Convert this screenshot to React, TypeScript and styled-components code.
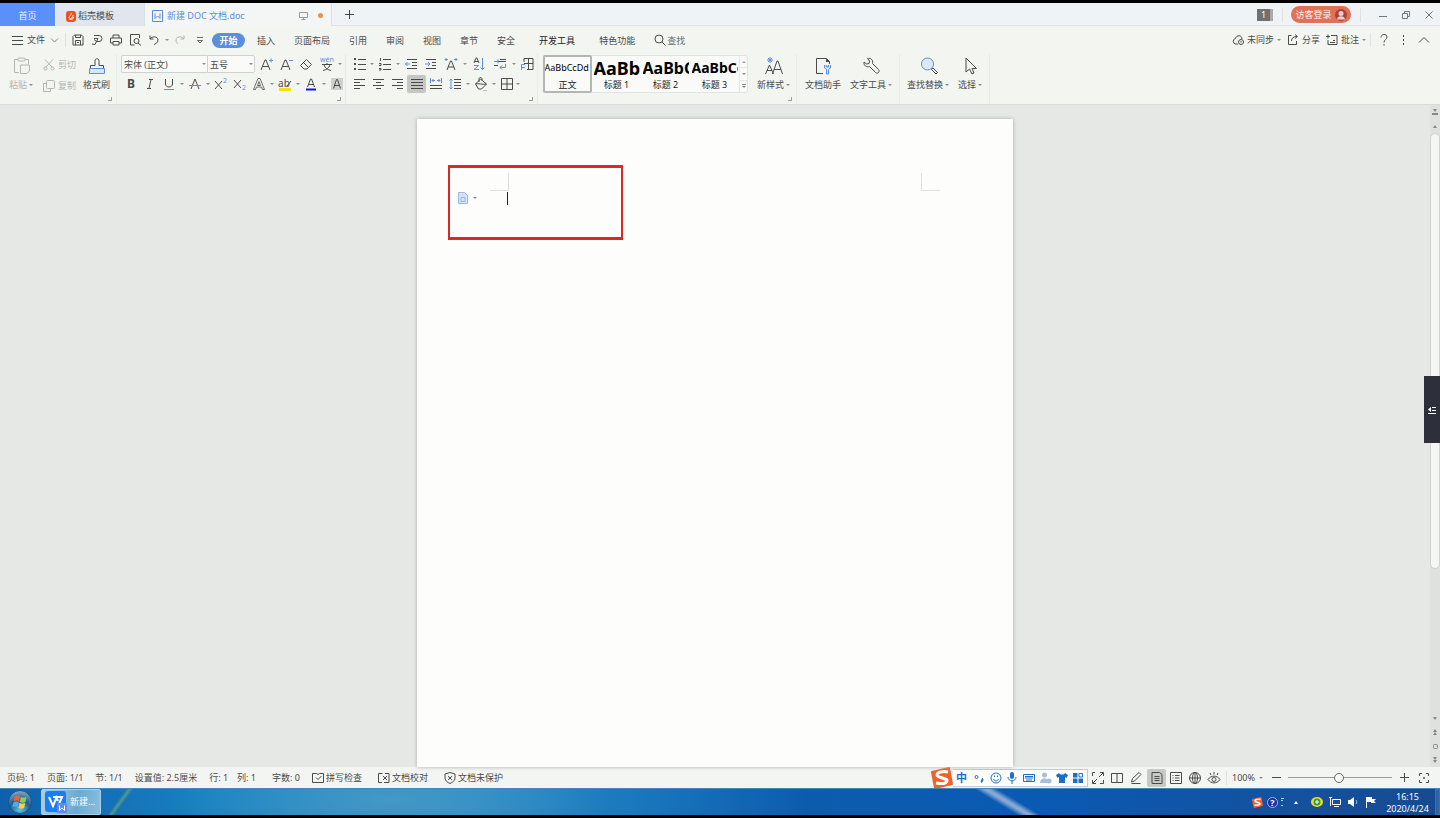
import React from 'react';
import styled, { createGlobalStyle, css } from 'styled-components';

const ink = '#4a4b4a';
const blue = '#5b8fdc';
const faint = '#b4b6b3';
const fontStack = '"Noto Sans", "Noto Sans CJK SC", sans-serif';

const GlobalStyle = createGlobalStyle`
  * { box-sizing: border-box; }
  body { margin: 0; background: #000; }
  button, input, select { font: inherit; color: inherit; }
  svg { display: block; flex: none; overflow: visible; }
`;

/* ---------- shared parts ---------- */

const Window = styled.div`
  display: flex;
  flex-direction: column;
  min-height: 100vh;
  padding: 3px 0;
  overflow: hidden;
  background: #000;
  color: ${ink};
  font: 9px/12px ${fontStack};
`;

const plain = css`
  display: flex;
  align-items: center;
  justify-content: center;
  flex: none;
  padding: 0;
  border: 0;
  background: none;
  white-space: nowrap;
  cursor: pointer;
`;

const Caret = styled.span<{ $w?: number }>`
  display: flex;
  flex: none;
  justify-content: center;
  width: ${(p) => p.$w ?? 7}px;
  &::after {
    content: '';
    border: 2px solid transparent;
    border-top-color: #8a8b8a;
    border-bottom: 0;
  }
`;

const Divider = styled.span<{ $m?: number; $r?: number }>`
  flex: none;
  width: 1px;
  height: 14px;
  margin: 0 ${(p) => p.$r ?? p.$m ?? 0}px 0 ${(p) => p.$m ?? 0}px;
  background: #dfe2df;
`;

const Spacer = styled.span`
  flex: 1;
`;

const Glyph = styled.svg`
  fill: none;
  stroke: currentColor;
  stroke-width: 1;
  text {
    fill: currentColor;
    stroke: none;
    text-anchor: middle;
    font-family: ${fontStack};
  }
  .b { stroke: ${blue}; }
  .bf { fill: ${blue}; stroke: none; }
  .f { fill: currentColor; stroke: none; }
`;

type IcoProps = { w?: number; h?: number; children: React.ReactNode };
const Ico = ({ w = 14, h = 14, children }: IcoProps) => (
  <Glyph width={w} height={h} viewBox={`0 0 ${w} ${h}`} aria-hidden="true">
    {children}
  </Glyph>
);

/* ---------- title bar ---------- */

const TitleBar = styled.header`
  display: flex;
  align-items: center;
  height: 23px;
  flex: none;
  background: #eff3f5;
  box-shadow: inset 0 -1px #dbe2e8;
`;

const Tab = styled.button<{ $kind: 'home' | 'idle' | 'active' }>`
  ${plain}
  height: 23px;
  padding-top: 2px;
  justify-content: flex-start;
  ${(p) => p.$kind === 'home' && css`
    width: 55px;
    justify-content: center;
    background: #5b8ff9;
    color: #eef4ff;
  `}
  ${(p) => p.$kind === 'idle' && css`
    width: 88px;
    margin-left: 1px;
    padding-left: 10px;
    gap: 2px;
    background: #e0e5ee;
  `}
  ${(p) => p.$kind === 'active' && css`
    width: 188px;
    padding: 2px 8px 0 7px;
    gap: 4px;
    border: solid #d9e0e6;
    border-width: 0 1px;
    background: #f3f6f5;
    color: ${blue};
  `}
`;

const UnsavedDot = styled.span`
  width: 5px;
  height: 5px;
  margin-left: 5px;
  border-radius: 50%;
  background: #e2954c;
`;

const TitleButton = styled.button<{ $w?: number }>`
  ${plain}
  width: ${(p) => p.$w ?? 23}px;
  height: 23px;
  color: #777;
`;

const CountBadge = styled.span`
  width: 16px;
  height: 12px;
  border-right: 3px solid #a9abab;
  background: #6f7171;
  color: #fff;
  line-height: 12px;
  text-align: center;
`;

const LoginPill = styled.button`
  ${plain}
  gap: 3px;
  width: 60px;
  height: 17px;
  border-radius: 9px;
  background: #e0705a;
  color: #fff3ee;
`;

/* ---------- menu row ---------- */

const MenuRow = styled.nav`
  display: flex;
  align-items: center;
  flex: none;
  height: 28px;
  padding: 0 6px 0 12px;
  background: #f3f5f1;
`;

const FileButton = styled.button`
  ${plain}
  gap: 4px;
  width: 47px;
  justify-content: flex-start;
`;

const QuickButton = styled.button<{ $w?: number; $dim?: boolean }>`
  ${plain}
  width: ${(p) => p.$w ?? 19}px;
  height: 20px;
  color: ${(p) => (p.$dim ? faint : ink)};
`;

const MenuTabs = styled.div`
  display: flex;
  align-items: center;
  gap: 19px;
  margin-left: 2px;
`;

const MenuTab = styled.button<{ $on?: boolean; $strong?: boolean; $apart?: boolean }>`
  ${plain}
  height: 15px;
  padding-top: 2px;
  margin-left: ${(p) => (p.$apart ? 5 : 0)}px;
  color: ${(p) => (p.$strong ? '#222' : ink)};
  ${(p) => p.$on && css`
    width: 33px;
    margin-right: -7px;
    border-radius: 8px;
    background: #5a8fe0;
    color: #fff;
    font-weight: 700;
  `}
`;

const SearchField = styled.label`
  display: flex;
  align-items: center;
  gap: 1px;
  input {
    width: 40px;
    padding: 2px 0 0;
    border: 0;
    outline: 0;
    background: none;
  }
  input::placeholder { color: #6c6d6c; opacity: 1; }
`;

const MenuAction = styled.button`
  ${plain}
  gap: 3px;
  margin-left: 6px;
`;

/* ---------- ribbon ---------- */

const Ribbon = styled.section`
  display: flex;
  flex: none;
  height: 51px;
  border-bottom: 1px solid #d8dbd8;
  background: #f3f5f1;
`;

const Group = styled.div<{ $w: number; $pad?: number; $gap?: number }>`
  position: relative;
  display: flex;
  flex: none;
  gap: ${(p) => p.$gap ?? 0}px;
  width: ${(p) => p.$w}px;
  padding-left: ${(p) => p.$pad ?? 4}px;
  border-right: 1px solid #e9ece8;
`;

const Launcher = styled.button`
  position: absolute;
  right: 4px;
  bottom: 3px;
  width: 4px;
  height: 4px;
  padding: 0;
  border: solid #9b9d9b;
  border-width: 0 1px 1px 0;
  background: none;
`;

const BigTool = styled.button<{ $dim?: boolean; $gap?: number }>`
  ${plain}
  flex-direction: column;
  justify-content: flex-start;
  gap: 4px;
  height: 42px;
  padding-top: 3px;
  margin-left: ${(p) => p.$gap ?? 0}px;
  color: ${(p) => (p.$dim ? faint : ink)};
`;

const ToolLabel = styled.span`
  display: flex;
  align-items: center;
`;

const Stack = styled.div`
  display: flex;
  flex-direction: column;
`;

const SmallTool = styled.button`
  ${plain}
  gap: 3px;
  height: 21px;
  margin: 0 7px 0 9px;
  color: ${faint};
`;

const ToolRow = styled.div`
  display: flex;
  align-items: center;
  height: 20px;
`;

const Tool = styled.button<{ $w?: number; $on?: boolean }>`
  ${plain}
  width: ${(p) => p.$w ?? 19}px;
  height: 18px;
  border-radius: 2px;
  background: ${(p) => (p.$on ? '#c4c7c3' : 'none')};
`;

const Combos = styled.div`
  display: flex;
  width: 135px;
  padding-right: 1px;
`;

const Combo = styled.label<{ $w: number }>`
  position: relative;
  display: flex;
  align-items: center;
  width: ${(p) => p.$w}px;
  height: 18px;
  border: 1px solid #cfd2cf;
  background: #fafbf9;
  &:first-child { border-right: 0; border-radius: 2px 0 0 2px; }
  &:last-child { border-radius: 0 2px 2px 0; }
  select {
    flex: 1;
    min-width: 0;
    padding: 1px 0 0 2px;
    border: 0;
    outline: 0;
    background: none;
    appearance: none;
  }
`;

const Gallery = styled.div`
  display: flex;
  width: 205px;
  height: 38px;
  margin: 1px 0 0 1px;
  border: 1px solid #e1e4e0;
  border-radius: 3px;
  background: #fafbf9;
`;

const StyleCard = styled.button<{ $size: number; $on?: boolean }>`
  ${plain}
  flex-direction: column;
  justify-content: flex-end;
  width: 49px;
  height: 38px;
  margin: -1px 0 0 ${(p) => (p.$on ? -1 : 0)}px;
  border: ${(p) => (p.$on ? '2px solid #b3b6b3' : '0')};
  border-radius: 2px;
  color: #1b1b1b;
  padding-bottom: ${(p) => (p.$on ? 0 : 2)}px;
  b {
    display: block;
    width: 46px;
    height: 21px;
    overflow: hidden;
    color: #000;
    font-size: ${(p) => p.$size}px;
    font-weight: ${(p) => (p.$on ? 400 : 700)};
    line-height: 20px;
    text-align: left;
  }
`;

const GalleryNav = styled.div`
  display: flex;
  flex-direction: column;
  flex: 1;
  button {
    ${plain}
    flex: 1;
    border-left: 1px solid #e6e8e5;
    border-bottom: 1px solid #e6e8e5;
  }
  button:last-child { border-bottom: 0; }
`;

/* ---------- work area ---------- */

const Workspace = styled.main`
  position: relative;
  display: flex;
  flex: 1;
  background: #e6e8e6;
`;

const Canvas = styled.div`
  display: flex;
  flex: 1;
  justify-content: center;
  padding-top: 14px;
`;

const Sheet = styled.article`
  position: relative;
  width: 596px;
  padding: 54px 73px 0;
  background: #fdfefc;
  box-shadow: 0 0 4px #a9aca9;
`;

const CropMarks = styled.div`
  display: flex;
  justify-content: space-between;
  &::before, &::after {
    content: '';
    width: 18px;
    height: 17px;
    border: solid #dfe1df;
    border-width: 0 1px 1px 0;
  }
  &::after { border-width: 0 0 1px 1px; }
`;

const TextCursor = styled.div`
  width: 1px;
  height: 13px;
  margin: 1px 0 0 17px;
  background: #222;
`;

const Highlight = styled.div`
  position: absolute;
  top: 46px;
  left: 31px;
  width: 175px;
  height: 75px;
  border: solid #dd2822;
  border-width: 3px 2px;
`;

const PasteOptions = styled.button`
  ${plain}
  position: absolute;
  top: 73px;
  left: 41px;
  gap: 2px;
  height: 12px;
`;

const ScrollRail = styled.aside`
  display: flex;
  flex-direction: column;
  align-items: center;
  width: 10px;
  background: #dfe1df;
  color: #858785;
`;

const RailButton = styled.button`
  ${plain}
  width: 10px;
  height: 14px;
`;

const Track = styled.div`
  display: flex;
  flex: 1;
  align-self: stretch;
  &::before {
    content: '';
    flex: 1;
    height: 75%;
    border: 1px solid #cfd2cf;
    border-radius: 5px;
    background: #f4f6f3;
  }
`;

const SideHandle = styled.button`
  ${plain}
  position: absolute;
  top: 41%;
  right: 0;
  width: 16px;
  height: 67px;
  background: #2d303b;
  color: #fff;
`;

/* ---------- status bar ---------- */

const StatusBar = styled.footer`
  display: flex;
  align-items: center;
  flex: none;
  height: 21px;
  padding: 0 6px 0 7px;
  background: #f3f5f2;
`;

const StatusItem = styled.span<{ $gap?: number }>`
  display: flex;
  align-items: center;
  gap: 2px;
  margin-right: ${(p) => p.$gap ?? 12}px;
  white-space: nowrap;
`;

const StatusButton = styled(StatusItem).attrs({ as: 'button' })`
  padding: 0;
  border: 0;
  background: none;
`;

const StatusTool = styled.button<{ $w?: number; $on?: boolean; $gap?: number }>`
  ${plain}
  width: ${(p) => p.$w ?? 19}px;
  height: 18px;
  margin-right: ${(p) => p.$gap ?? 0}px;
  border-radius: 2px;
  background: ${(p) => (p.$on ? '#c6c9c6' : 'none')};
`;

const ImeBar = styled.div`
  display: flex;
  align-items: center;
  height: 20px;
  color: #1d6fc4;
`;

const ImeKeys = styled.div`
  display: flex;
  align-items: center;
  height: 18px;
  padding-right: 1px;
  border: 1px solid #c3cad3;
  border-left: 0;
  background: #fdfefe;
`;

const ImeKey = styled.button<{ $w?: number }>`
  ${plain}
  width: ${(p) => p.$w ?? 17}px;
  font-size: 11px;
  font-weight: 700;
`;

const Zoom = styled.label`
  display: flex;
  align-items: center;
  width: 34px;
  select {
    width: 25px;
    padding: 0;
    border: 0;
    outline: 0;
    background: none;
    appearance: none;
  }
`;

const ZoomRange = styled.input`
  appearance: none;
  width: 104px;
  height: 12px;
  margin: 0 2px;
  background: linear-gradient(#9c9e9c, #9c9e9c) center / 100% 1px no-repeat;
  &::-webkit-slider-thumb {
    appearance: none;
    width: 10px;
    height: 10px;
    border: 1px solid #666;
    border-radius: 50%;
    background: #f8faf7;
  }
`;

/* ---------- taskbar ---------- */

const TaskBar = styled.footer`
  display: flex;
  align-items: center;
  flex: none;
  height: 27px;
  padding-left: 7px;
  background:
    linear-gradient(126deg, transparent 102px, #76b56a99 105px, transparent 108px),
    linear-gradient(31deg, transparent 524px, #86a9d4 529px, #86a9d4 531px, transparent 536px),
    radial-gradient(ellipse 220px 60px at 390px 10px, #4398c6, transparent),
    linear-gradient(90deg, #0e60ae 0, #1672b8 8%, #1581c0 14%, #2a8dc6 30%, #1a78be 44%, #0c5cae 56%, #0a5ab4 72%, #15509c 92%, #164a90 100%);
  border-top: 1px solid #4585b8;
`;

const StartButton = styled.button`
  ${plain}
  width: 26px;
`;

const TaskButton = styled.button`
  ${plain}
  justify-content: flex-start;
  gap: 3px;
  width: 60px;
  height: 26px;
  margin-left: 8px;
  padding-left: 3px;
  border: 1px solid #a8d0e8;
  border-radius: 2px;
  background: linear-gradient(100deg, #a8cfe4, #6aaad2 60%, #8abfde);
  color: #fff;
`;

const TrayButton = styled.button<{ $w?: number }>`
  ${plain}
  width: ${(p) => p.$w ?? 18}px;
  color: #fff;
`;

const Clock = styled.time`
  width: 55px;
  padding-top: 1px;
  color: #fff;
  text-align: center;
`;

const ShowDesktop = styled.button`
  width: 5px;
  height: 26px;
  padding: 0;
  border: 1px solid #3f6fae;
  background: #2d62a4;
`;

/* ---------- drawings ---------- */

const SogouMark = ({ s }: { s: number }) => (
  <svg width={s} height={s} viewBox="0 0 22 22" aria-hidden="true">
    <path d="M1 5 18 1l3 16L4 21z" fill="#f0622a" stroke="#f0622a" strokeWidth="2" strokeLinejoin="round" />
    <path d="M17 5C12 4 6 5 6 8s11 3 10 6-6 3-11 2" fill="none" stroke="#fff" strokeWidth="3" />
  </svg>
);

const AlignLines = ({ d }: { d: string }) => (
  <Ico w={12} h={12}><path d={d} /></Ico>
);

const LetterIcon = ({ mark, minus }: { mark?: boolean; minus?: boolean }) => (
  <Ico>
    <path d="M2 13 6 3h1l4 10M3.500 9.500h6" />
    {mark && <path className="b" d="M10 3.500h4M12 1.500v4" />}
    {minus && <path className="b" d="M10 3.500h4" />}
  </Ico>
);

const Bullets = ({ numbers }: { numbers?: boolean }) => (
  <Ico w={12} h={12}>
    <path d="M4 1.500h8M4 6.500h8M4 11.500h8" />
    {numbers
      ? <path d="M1.500 0v3M0 5.500h2v2H0M0 10.500h2v1.500H0" />
      : <path className="f" d="M0 0h2v2H0zM0 5h2v2H0zM0 10h2v2H0z" />}
  </Ico>
);

const quick: { name: string; w?: number; dim?: boolean; caret?: boolean; art: React.ReactNode }[] = [
  { name: '保存', art: <Ico w={12} h={12}><path d="M1 2.500 2.500 1h7L11 2.500V11H1zM3.500 1v2.500h5V1M3.500 11V6.500h5V11M5 8.500h2" /></Ico> },
  { name: '输出为PDF', art: <Ico w={12} h={12}><path d="M3 1.500h5a2.500 2.500 0 0 1 0 6H5M3 4.500h4M7 4.500 4 10.500M4 10.500l-3-.5M5.500 7.500 3 5.500" /></Ico> },
  { name: '打印', art: <Ico w={12} h={12}><path d="M3 4V1h6v3M3 9H.500V4h11v5H9M3 7.500h6V11H3z" /></Ico> },
  { name: '打印预览', art: <Ico w={12} h={12}><path d="M10.500 4V.5h-9v10.500h4" /><circle cx="7.500" cy="7" r="2.500" /><path d="m9 9 3 2.500" /></Ico> },
  { name: '撤销', caret: true, art: <Ico w={12} h={12}><path d="M2 1.500v3.500h3.500M2 5c2-3 8-3 8 1 0 3-3 4-4 4.500" /></Ico> },
  { name: '恢复', dim: true, art: <Ico w={12} h={12}><path d="M10 1.500v3.500H6.500M10 5C8 2 2 2 2 6c0 2 1 3 2 4" /></Ico> },
  { name: '自定义快速访问工具栏', w: 21, art: <Ico w={8} h={8}><path d="M1 1.500h6M1.500 4.500h5L4 7z" strokeWidth=".8" /></Ico> },
];

const menus = ['插入', '页面布局', '引用', '审阅', '视图', '章节', '安全', '开发工具', '特色功能'];

const cards = [
  { sample: 'AaBbCcDd', name: '正文', size: 9 },
  { sample: 'AaBb', name: '标题 1', size: 18 },
  { sample: 'AaBbC', name: '标题 2', size: 16 },
  { sample: 'AaBbCc', name: '标题 3', size: 14 },
];

export default function App() {
  return (
    <Window>
      <GlobalStyle />

      <TitleBar>
        <Tab $kind="home">首页</Tab>
        <Tab $kind="idle">
          <Ico w={10} h={12}>
            <rect x="0" y="1" width="10" height="11" rx="3" fill="#f0501e" stroke="none" />
            <path d="M5 3c1 2-2 3-2 5M7 5c0 2-1 4-4 4M7.500 7c0 2-2 3-4 2" stroke="#fff" />
          </Ico>
          稻壳模板
        </Tab>
        <Tab $kind="active">
          <Ico w={11} h={12}><path d="M.5.5h10v11H.5zM3 3.500v5l2.500-2.500L8 8.500v-5" /></Ico>
          新建 DOC 文档.doc
          <Spacer />
          <Ico w={10} h={10}><path d="M.5 1.500h8v5h-8zM4.500 6.500v2M2.500 8.500h4" stroke="#999b9b" /></Ico>
          <UnsavedDot />
        </Tab>
        <TitleButton $w={34} aria-label="新建标签">
          <Ico w={9} h={9}><path d="M4.500 0v9M0 4.500h9" stroke="#444" /></Ico>
        </TitleButton>
        <Spacer />
        <CountBadge>1</CountBadge>
        <Divider $m={9} $r={8} />
        <LoginPill>
          访客登录
          <Ico w={12} h={12}>
            <circle cx="6" cy="6" r="6" fill="#a8443c" stroke="none" />
            <circle cx="6" cy="4.500" r="2.500" fill="#f1cfc9" stroke="none" />
            <path d="M2 10.500c0-4.500 8-4.500 8 0z" fill="#f1cfc9" stroke="none" />
          </Ico>
        </LoginPill>
        <Divider $m={9} $r={10} />
        <TitleButton aria-label="最小化"><Ico w={8} h={8}><path d="M0 5.500h8" /></Ico></TitleButton>
        <TitleButton aria-label="还原"><Ico w={8} h={8}><path d="M.5 2.500h5v5h-5zM2.500 2.500V.5h5v5h-2" /></Ico></TitleButton>
        <TitleButton aria-label="关闭"><Ico w={8} h={8}><path d="m.5.5 7 7M7.500.5l-7 7" /></Ico></TitleButton>
      </TitleBar>

      <MenuRow>
        <FileButton>
          <Ico w={11} h={9}><path d="M0 .5h11M0 4.500h11M0 8.500h11" /></Ico>
          文件
          <Ico w={10} h={8}><path d="m2 2.500 3.500 3.500L9 2.500" stroke="#8a8b8a" /></Ico>
        </FileButton>
        <Divider $m={6} $r={2} />
        {quick.map((q) => (
          <React.Fragment key={q.name}>
            <QuickButton $w={q.w} $dim={q.dim} aria-label={q.name}>{q.art}</QuickButton>
            {q.caret && <Caret />}
          </React.Fragment>
        ))}
        <MenuTabs>
          <MenuTab $on>开始</MenuTab>
          {menus.map((m) => (
            <MenuTab key={m} $strong={m === '开发工具'} $apart={m.endsWith('工具') || m.endsWith('功能')}>
              {m}
            </MenuTab>
          ))}
          <SearchField>
            <Ico w={12} h={12}><circle cx="5" cy="5" r="4" /><path d="m8 8 3.500 3.500" /></Ico>
            <input aria-label="查找" placeholder="查找" />
          </SearchField>
        </MenuTabs>
        <Spacer />
        <MenuAction>
          <Ico w={12} h={12}><path d="M6 10H3.500a2.800 2.800 0 0 1 0-5.500c1-4 6.500-3.500 6.500.500" /><circle cx="9" cy="8" r="2.500" /><path d="M9 7v1.500" /></Ico>
          未同步
          <Caret $w={4} />
        </MenuAction>
        <MenuAction>
          <Ico w={12} h={12}><path d="M4.500 1.500h-3v9h8V7M4.500 7c0-3 2-4.500 5.500-4.500M8 .5l2.500 2L8 4.500" /></Ico>
          分享
        </MenuAction>
        <MenuAction>
          <Ico w={12} h={12}><path d="M5 1.500h6v9H2V6M0 2.500h4M2 .5v4M4 8.500h5M7 6.500h2" /></Ico>
          批注
          <Caret $w={4} />
        </MenuAction>
        <Divider $m={4} $r={3} />
        <QuickButton $w={20} aria-label="帮助">
          <Ico w={8} h={12}><path d="M1 3.500c0-4 6-4 6-.5C7 5.500 4 5.500 4 8.500M4 10v1.500" /></Ico>
        </QuickButton>
        <QuickButton $w={20} aria-label="更多">
          <Ico w={4} h={10}><path className="f" d="M1 0h1v2H1zM1 4h1v2H1zM1 8h1v2H1z" /></Ico>
        </QuickButton>
        <QuickButton $w={20} aria-label="折叠功能区">
          <Ico w={12} h={8}><path d="m1 6.500 5-5 5 5" /></Ico>
        </QuickButton>
      </MenuRow>

      <Ribbon>
        <Group $w={117} $pad={9}>
          <BigTool $dim>
            <Ico w={18} h={18}>
              <path d="M5 2.500H1.500v13H6M12 2.500h3.500V7" />
              <rect x="5" y="1" width="7" height="3" rx="1" />
              <path d="M7.500 8h9v6l-2.500 2.500H7.500z" />
            </Ico>
            <ToolLabel>粘贴<Caret /></ToolLabel>
          </BigTool>
          <Stack>
            <SmallTool>
              <Ico w={12} h={12}><path d="M2 .5 9 8M10 .5 3 8" /><circle cx="2.500" cy="9.500" r="1.500" /><circle cx="9.500" cy="9.500" r="1.500" /></Ico>
              剪切
            </SmallTool>
            <SmallTool>
              <Ico w={12} h={12}><rect x="3.500" y=".5" width="8" height="8" rx="1" /><path d="M3 3.500H.500v8h7V9" /></Ico>
              复制
            </SmallTool>
          </Stack>
          <BigTool>
            <Ico w={18} h={18}>
              <path d="M2.500 11V8.500H7V4c0-3 4-3 4 0v4.500h4.500V11" />
              <path className="b" d="M1.500 11.500h15v5h-15z" fill="#dbe7f8" />
            </Ico>
            <ToolLabel>格式刷</ToolLabel>
          </BigTool>
          <Launcher aria-label="剪贴板设置" />
        </Group>

        <Group $w={229}>
          <Stack>
            <ToolRow>
              <Combos>
                <Combo $w={86}>
                  <select aria-label="字体"><option>宋体 (正文)</option></select>
                  <Caret />
                </Combo>
                <Combo $w={48}>
                  <select aria-label="字号"><option>五号</option></select>
                  <Caret />
                </Combo>
              </Combos>
              <Tool $w={20} aria-label="增大字号"><LetterIcon mark /></Tool>
              <Tool $w={20} aria-label="减小字号"><LetterIcon minus /></Tool>
              <Tool $w={20} aria-label="清除格式"><Ico><path d="m1.500 8.500 6-6 5 5-4.500 4.500H5zM4.500 5.500l5 5" /></Ico></Tool>
              <Tool $w={22} aria-label="拼音指南">
                <Ico><text className="bf" x="7" y="5" fontSize="7">wén</text><path d="M2 7.500h10M7 6v1.500M4 8c1 3 4 5 7 5.500M10 8c-1 3-4 5-7 5.500" /></Ico>
              </Tool>
              <Caret $w={4} />
            </ToolRow>
            <ToolRow>
              <Tool aria-label="加粗"><Ico><text x="7" y="11" fontSize="12" fontWeight="700">B</text></Ico></Tool>
              <Tool aria-label="倾斜"><Ico><path d="M6 2.500h4M4 11.500h4M8 2.500l-2 9" /></Ico></Tool>
              <Tool aria-label="下划线"><Ico><path d="M3.500 2v5c0 4 7 4 7 0V2" /><path className="b" d="M2 12.500h10" /></Ico></Tool>
              <Caret />
              <Tool aria-label="删除线"><Ico><path d="m3 12 4-10 4 10" /><path d="M1 8.500h12" stroke="#d9625a" /></Ico></Tool>
              <Caret />
              <Tool aria-label="上标"><Ico><path d="m1 4 7 8M8 4l-7 8" /><text className="bf" x="11" y="6" fontSize="7">2</text></Ico></Tool>
              <Tool aria-label="下标"><Ico><path d="m1 3 7 8M8 3l-7 8" /><text className="bf" x="11" y="13" fontSize="7">2</text></Ico></Tool>
              <Tool aria-label="文字效果"><Ico><path d="M1.500 12.500 6 1.500h2l4.500 11h-2L9.500 10h-5l-1 2.500zM5.500 8.500h3L7 4.500z" strokeWidth=".8" /></Ico></Tool>
              <Caret />
              <Tool aria-label="突出显示">
                <Ico><path d="M1 11h12v3H1z" fill="#f2e215" stroke="none" /><text x="6" y="10" fontSize="10">ab</text><path d="m9 9 4-5" /></Ico>
              </Tool>
              <Caret />
              <Tool aria-label="字体颜色">
                <Ico><path d="m3.500 10 3-8h1l3 8M4.500 7.500h5" /><path d="M2 11.500h10v2H2z" fill="#1414e0" stroke="none" /></Ico>
              </Tool>
              <Caret />
              <Tool aria-label="字符底纹">
                <Ico><path d="M1 1h12v12H1z" fill="#cfd1ce" stroke="none" /><path d="m3.500 11.500 3-9h1l3 9M4.500 8.500h5" /></Ico>
              </Tool>
            </ToolRow>
          </Stack>
          <Launcher aria-label="字体设置" />
        </Group>

        <Group $w={192}>
          <Stack>
            <ToolRow>
              <Tool aria-label="项目符号"><Bullets /></Tool>
              <Caret $w={6} />
              <Tool aria-label="编号"><Bullets numbers /></Tool>
              <Caret />
              <Tool $w={20} aria-label="减少缩进"><Ico w={12} h={12}><path d="M2 1.500h10M7 4.500h5M7 7.500h5M2 10.500h10" /><path className="b" d="M0 6h5M2.500 4 .500 6l2 2" /></Ico></Tool>
              <Tool $w={20} aria-label="增加缩进"><Ico w={12} h={12}><path d="M1 1.500h10M7 4.500h4M7 7.500h4M1 10.500h10" /><path className="b" d="M0 6h5M3 4l2 2-2 2" /></Ico></Tool>
              <Tool $w={20} aria-label="字符缩放"><Ico><path d="m3 13 3.500-9h1L11 13M4 10h6" /><path className="b" d="M1 2.500h3M2.500 1 1 2.500 2.500 4M10 2.500h3M11.500 1 13 2.500 11.500 4" /></Ico></Tool>
              <Caret />
              <Tool $w={22} aria-label="排序"><Ico><path d="m2 6 2-5h1l2 5M3 4.500h3" /><path className="b" d="M2 8.500h4.500L2 12.500h5M10.500 1v11.500M8.500 10.500l2 2 2-2" /></Ico></Tool>
              <Tool $w={20} aria-label="换行"><Ico w={12} h={12}><path d="M0 3.500h12M6 1.500h6M0 7.500h4" /><path className="b" d="M0 3.500h4M4 1.500v4M11.500 6v3.500H6M8 7.500l-2 2 2 2" /></Ico></Tool>
              <Caret />
              <Tool $w={20} aria-label="制表位"><Ico><path d="M4 5V1.500h9v11H7M8.500 1.500v11M4 6.500h9" /><path className="b" d="M1.500 13V7.500H5M1.500 10.500H5" /></Ico></Tool>
            </ToolRow>
            <ToolRow>
              <Tool aria-label="左对齐"><AlignLines d="M0 1.500h11M0 4.500h6M0 7.500h11M0 10.500h6" /></Tool>
              <Tool aria-label="居中"><AlignLines d="M0 1.500h11M3 4.500h5M0 7.500h11M3 10.500h5" /></Tool>
              <Tool aria-label="右对齐"><AlignLines d="M0 1.500h11M5 4.500h6M0 7.500h11M5 10.500h6" /></Tool>
              <Tool $on aria-label="两端对齐"><AlignLines d="M0 1.500h12M0 4.500h12M0 7.500h12M0 10.500h12" /></Tool>
              <Tool aria-label="分散对齐"><Ico w={12} h={12}><path d="M0 7.500h12M0 10.500h12" /><path className="b" d="M.5 0v5M11.500 0v5M2 2.500h3M3.500 1 2 2.500 3.500 4M7 2.500h3M8.500 1 10 2.500 8.500 4" /></Ico></Tool>
              <Tool aria-label="行距"><Ico w={12} h={12}><path d="M5 1.500h7M5 4.500h7M5 7.500h7M5 10.500h7" /><path className="b" d="M2 1v10M.500 2.500 2 1l1.500 1.500M.500 9.500 2 11l1.500-1.500" /></Ico></Tool>
              <Caret />
              <Tool $w={20} aria-label="底纹"><Ico><path d="m6.500 2 6 5-5 5H4.500L1.500 7zM5 5V2c0-2 3-2 3 0v1.500M1.500 7c3-1 7 1 11 0" /><path d="M9 13.500h4" stroke="#dcb4b0" /></Ico></Tool>
              <Caret $w={6} />
              <Tool aria-label="边框"><Ico w={12} h={12}><path d="M.5.5h11v11H.5zM6 .5v11M.5 6h11" /></Ico></Tool>
              <Caret $w={4} />
            </ToolRow>
          </Stack>
          <Launcher aria-label="段落设置" />
        </Group>

        <Group $w={259}>
          <Gallery>
            {cards.map((c, i) => (
              <StyleCard key={c.name} $size={c.size} $on={i === 0}>
                <b>{c.sample}</b>
                {c.name}
              </StyleCard>
            ))}
            <GalleryNav>
              <button aria-label="上一行"><Ico w={4} h={4}><path className="f" d="M0 3h4L2 1z" opacity=".5" /></Ico></button>
              <button aria-label="下一行"><Caret $w={4} /></button>
              <button aria-label="展开"><Ico w={4} h={5}><path d="M0 .5h4" stroke="#8a8b8a" /><path d="M0 2h4L2 4z" fill="#8a8b8a" stroke="none" /></Ico></button>
            </GalleryNav>
          </Gallery>
          <BigTool $gap={9}>
            <Ico w={18} h={18}>
              <path d="m.5 17 4-9 4 9M2 13.500h5M7.500 17l4.500-13h1l4.500 13M9 12.500h7" />
              <path className="b" d="M5 0v6M2 3h6M3 1l4 4M7 1 3 5" />
            </Ico>
            <ToolLabel>新样式<Caret /></ToolLabel>
          </BigTool>
          <Launcher aria-label="样式设置" />
        </Group>

        <Group $w={103} $pad={8} $gap={9}>
          <BigTool>
            <Ico w={18} h={18}>
              <path d="M9 16.500H2.500v-15h10l3 3V7" />
              <path className="f" d="M12 1v4h4z" />
              <path className="b" d="M10.500 8v3l2 1.500V17h2v-4.500l2-1.500V8M12.500 8v2h2V8" fill="#dbe7f8" />
            </Ico>
            <ToolLabel>文档助手</ToolLabel>
          </BigTool>
          <BigTool>
            <Ico w={18} h={18}>
              <path d="M4.500 1.500c3-1 6 1.500 5 5l6 6c2 2-1 5-3 3l-6-6c-3 1-6-1-5.500-4.500L3.500 7l2.500-.5.5-2.500z" />
            </Ico>
            <ToolLabel>文字工具<Caret /></ToolLabel>
          </BigTool>
        </Group>

        <Group $w={90} $pad={7} $gap={8}>
          <BigTool>
            <Ico w={18} h={18}>
              <circle className="b" cx="7.500" cy="7" r="6" fill="#dfe9f6" />
              <path d="m11.500 12.500 1.500-1.500 4.500 4.500-1.500 1.500z" />
            </Ico>
            <ToolLabel>查找替换<Caret /></ToolLabel>
          </BigTool>
          <BigTool>
            <Ico w={18} h={18}><path d="M4 1v14l3.500-3L10 17l2-1-2-4.500h4.500z" /></Ico>
            <ToolLabel>选择<Caret /></ToolLabel>
          </BigTool>
        </Group>
      </Ribbon>

      <Workspace>
        <Canvas>
          <Sheet>
            <CropMarks />
            <TextCursor />
            <Highlight />
            <PasteOptions aria-label="粘贴选项">
              <Ico w={11} h={12}>
                <path d="M.5.5h6l3 3v8h-9zM3 5.500h4v4H3z" stroke="#9db8dc" fill="#d5e2f3" />
              </Ico>
              <Caret />
            </PasteOptions>
          </Sheet>
        </Canvas>
        <ScrollRail>
          <RailButton aria-label="标尺"><Ico w={6} h={8}><path className="f" d="M1 1h4L3 4zM0 5h6v2H0z" /></Ico></RailButton>
          <RailButton aria-label="向上滚动"><Ico w={4} h={3}><path className="f" d="M0 3h4L2 0z" /></Ico></RailButton>
          <Track />
          <RailButton aria-label="向下滚动"><Ico w={4} h={3}><path className="f" d="M0 0h4L2 3z" /></Ico></RailButton>
          <RailButton aria-label="上一页"><Ico w={4} h={6}><path className="f" d="M0 3h4L2 0zM0 6h4L2 3z" /></Ico></RailButton>
          <RailButton aria-label="选择浏览对象"><Ico w={5} h={5}><rect x=".5" y=".5" width="4" height="4" rx="1" /></Ico></RailButton>
          <RailButton aria-label="下一页"><Ico w={4} h={6}><path className="f" d="M0 0h4L2 3zM0 3h4L2 6z" /></Ico></RailButton>
        </ScrollRail>
        <SideHandle aria-label="展开侧栏">
          <Ico w={8} h={8}><path d="M4 1.500h4M4 4.500h4M0 7.500h8" /><path className="f" d="M3 1v5L0 3.500z" /></Ico>
        </SideHandle>
      </Workspace>

      <StatusBar>
        <StatusItem>页码: 1</StatusItem>
        <StatusItem>页面: 1/1</StatusItem>
        <StatusItem>节: 1/1</StatusItem>
        <StatusItem>设置值: 2.5厘米</StatusItem>
        <StatusItem $gap={9}>行: 1</StatusItem>
        <StatusItem $gap={16}>列: 1</StatusItem>
        <StatusItem>字数: 0</StatusItem>
        <StatusButton $gap={16}>
          <Ico w={12} h={12}><path d="M6 10.500H.5v-9h4l1.500 1 1.500-1h4v9H6M4 5.500l2 2 3.500-3.500" /></Ico>
          拼写检查
        </StatusButton>
        <StatusButton $gap={16}>
          <Ico w={12} h={12}><path d="M4 10.500H.5v-9h4M7 1.500h4v9H6M5 4l4 4M9 4 5 8" /></Ico>
          文档校对
        </StatusButton>
        <StatusButton>
          <Ico w={12} h={12}><path d="M6 .5 11 2v4c0 3-3 4.500-5 5.500C4 10.500 1 9 1 6V2zM4 4l4 4M8 4 4 8" /></Ico>
          文档未保护
        </StatusButton>
        <Spacer />
        <ImeBar>
          <SogouMark s={22} />
          <ImeKeys>
            <ImeKey aria-label="中文">中</ImeKey>
            <ImeKey aria-label="标点"><Ico w={10} h={10}><circle cx="2.500" cy="4" r="1.500" /><path d="M8 5.500c1 1 0 3-1 3.500" strokeWidth="2" /></Ico></ImeKey>
            <ImeKey aria-label="表情"><Ico w={12} h={12}><circle cx="6" cy="6" r="5" /><path d="M3.500 7c1 2.500 4 2.500 5 0M4.500 3.500v1.500M7.500 3.500v1.500" /></Ico></ImeKey>
            <ImeKey $w={16} aria-label="语音"><Ico w={10} h={12}><rect className="f" x="3" y="0" width="4" height="7" rx="2" /><path d="M1 5c0 5 8 5 8 0M5 9v3" /></Ico></ImeKey>
            <ImeKey aria-label="软键盘"><Ico w={12} h={10}><path d="M.5 1.500h11v7H.5zM2 3.500h8M2 5h8M3 7h6" /></Ico></ImeKey>
            <ImeKey $w={16} aria-label="登录"><Ico w={11} h={12}><g fill="#a9bfdb" stroke="none"><circle cx="4.500" cy="3" r="2.500" /><path d="M0 11c0-6 8-6 8-1v1z" /><circle cx="9" cy="9" r="2.500" /></g></Ico></ImeKey>
            <ImeKey $w={17} aria-label="皮肤"><Ico w={12} h={10}><path className="f" d="M3 0c1 2 5 2 6 0l3 2-1.500 3L9 4v6H3V4L1.500 5 0 2z" /></Ico></ImeKey>
            <ImeKey $w={16} aria-label="工具箱"><Ico w={10} h={10}><path className="f" d="M0 0h4.500v4.500H0zM0 5.500h4.500V10H0zM5.500 5.500H10V10H5.500z" /><path d="M6 .500h3.500v3.500H6z" /></Ico></ImeKey>
          </ImeKeys>
        </ImeBar>
        <StatusTool aria-label="全屏显示"><Ico w={12} h={12}><path d="M.5 4V.5H3M8 .5h3.500V4M11.500 8v3.500H8M4 11.500H.5V8M7 5l4-4M5 7l-4 4" /></Ico></StatusTool>
        <StatusTool aria-label="阅读版式"><Ico w={12} h={12}><path d="M6 1.500H.5v9h11v-9zv9" /></Ico></StatusTool>
        <StatusTool $gap={2} aria-label="写作模式"><Ico w={12} h={12}><path d="m1.500 10 1-3.500L9 .5l2 2L4.500 9zM1.500 11.500h9" /></Ico></StatusTool>
        <StatusTool $on aria-label="页面视图"><Ico w={12} h={12}><path d="M1 .5h7.500l2.500 2v9H1zM3.500 4.500h5M3.500 6.500h5M3.500 8.500h5" /></Ico></StatusTool>
        <StatusTool aria-label="大纲"><Ico w={12} h={12}><path d="M.5.5h11v11H.5zM5 3.500h4.500M5 6h4.500M5 8.500h4.500M2.500 3.500h1M2.500 6h1M2.500 8.500h1" /></Ico></StatusTool>
        <StatusTool aria-label="Web版式"><Ico w={12} h={12}><circle cx="6" cy="6" r="5.500" /><ellipse cx="6" cy="6" rx="2.500" ry="5.500" /><path d="M.5 6h11M6 .5v11" /></Ico></StatusTool>
        <StatusTool aria-label="护眼模式"><Ico w={12} h={12}><path d="M0 7.500c3-4.500 9-4.500 12 0-3 4.500-9 4.500-12 0M6 0v2.500M2 1l1 2M10 1 9 3" /><circle cx="6" cy="7.500" r="2" /></Ico></StatusTool>
        <Divider $m={3} $r={5} />
        <Zoom>
          <select aria-label="显示比例"><option>100%</option></select>
          <Caret />
        </Zoom>
        <StatusTool $w={20} aria-label="缩小"><Ico w={9} h={9}><path d="M0 4.500h9" /></Ico></StatusTool>
        <ZoomRange type="range" min={0} max={200} defaultValue={98} aria-label="缩放" />
        <StatusTool $w={20} aria-label="放大"><Ico w={9} h={9}><path d="M0 4.500h9M4.500 0v9" /></Ico></StatusTool>
        <StatusTool $w={20} aria-label="适合页面"><Ico w={10} h={10}><path d="M.5 3V.5H3M7 .5h2.500V3M9.500 7v2.500H7M3 9.500H.5V7" /><circle className="f" cx="5" cy="5" r="1" /></Ico></StatusTool>
      </StatusBar>

      <TaskBar>
        <StartButton aria-label="开始菜单">
          <svg width="24" height="24" viewBox="0 0 24 24" aria-hidden="true">
            <defs>
              <radialGradient id="orb" cx=".5" cy=".85" r=".9">
                <stop offset="0" stopColor="#5cc4ea" />
                <stop offset=".5" stopColor="#1c5f90" />
                <stop offset="1" stopColor="#9cb7c9" />
              </radialGradient>
            </defs>
            <circle cx="12" cy="12" r="11.500" fill="url(#orb)" stroke="#1b4f7c" />
            <path d="M6.500 6.500c2-1.500 3.500-1.500 5.500 0l-1 5c-2-1.500-3.500-1-5.500 0z" fill="#e8643a" />
            <path d="M12.800 7c2 1 3.500 1 5.700 0l-1 5c-2 1-3.500 1-5.700 0z" fill="#9ccb4a" />
            <path d="M5.300 12.500c2-1.500 3.500-1 5.500 0l-1 5c-2-1-3.500-1.500-5.500 0z" fill="#5aa7e6" />
            <path d="M11.500 13c2 1 3.500 1 5.700 0l-1 5c-2 1-3.500 1-5.700 0z" fill="#f7cf4a" />
          </svg>
        </StartButton>
        <TaskButton>
          <svg width="22" height="22" viewBox="0 0 22 22" aria-hidden="true">
            <rect width="21" height="21" rx="3" fill="#1f7cf0" />
            <path d="m4 6 4 9 3.500-8.500L13 10M8 6h9l-3 7" fill="none" stroke="#fff" strokeWidth="2" />
            <rect x="12" y="12" width="10" height="10" rx="1" fill="#5a8ff0" />
            <path d="M14.500 14.500v5l2.500-2.500 2.500 2.500v-5" fill="none" stroke="#fff" />
          </svg>
          新建...
        </TaskButton>
        <Spacer />
        <TrayButton $w={14} aria-label="搜狗输入法"><SogouMark s={11} /></TrayButton>
        <TrayButton $w={16} aria-label="帮助">
          <Ico w={11} h={11}><circle cx="5.500" cy="5.500" r="5" fill="#1a2fa8" stroke="#9cb4e0" /><text x="5.500" y="9" fontSize="9" fontWeight="700">?</text></Ico>
        </TrayButton>
        <TrayButton $w={4} aria-label="选项"><Ico w={3} h={10}><path d="M0 1.500h3M0 3.500h2M0 8.500h2" opacity=".7" /></Ico></TrayButton>
        <TrayButton $w={24} aria-label="显示隐藏的图标"><Ico w={4} h={3}><path className="f" d="M0 3h4L2 0z" /></Ico></TrayButton>
        <TrayButton aria-label="安全卫士">
          <Ico w={12} h={12}><ellipse cx="6" cy="6" rx="6" ry="5" fill="#f0d92c" stroke="none" /><circle cx="6" cy="6" r="3.500" fill="#31a03c" stroke="none" /><path d="M6 4v4M4 6h4" /></Ico>
        </TrayButton>
        <TrayButton aria-label="网络"><Ico w={12} h={12}><path d="M3.500 3.500h8v5h-8zM5 10.500h5M1.500 1v9M0 1.500h3" /></Ico></TrayButton>
        <TrayButton aria-label="音量"><Ico w={12} h={12}><path className="f" d="M1 4h2l4-3v10L3 8H1z" /><path d="M9 4c1 1 1 3 0 4" opacity=".6" /></Ico></TrayButton>
        <TrayButton aria-label="操作中心"><Ico w={12} h={12}><path d="M1.500 1v11" /><path className="f" d="M2 1h5v2h4L9 5l2 2H6V6H2z" /></Ico></TrayButton>
        <Clock>16:15<br />2020/4/24</Clock>
        <ShowDesktop aria-label="显示桌面" />
      </TaskBar>
    </Window>
  );
}
